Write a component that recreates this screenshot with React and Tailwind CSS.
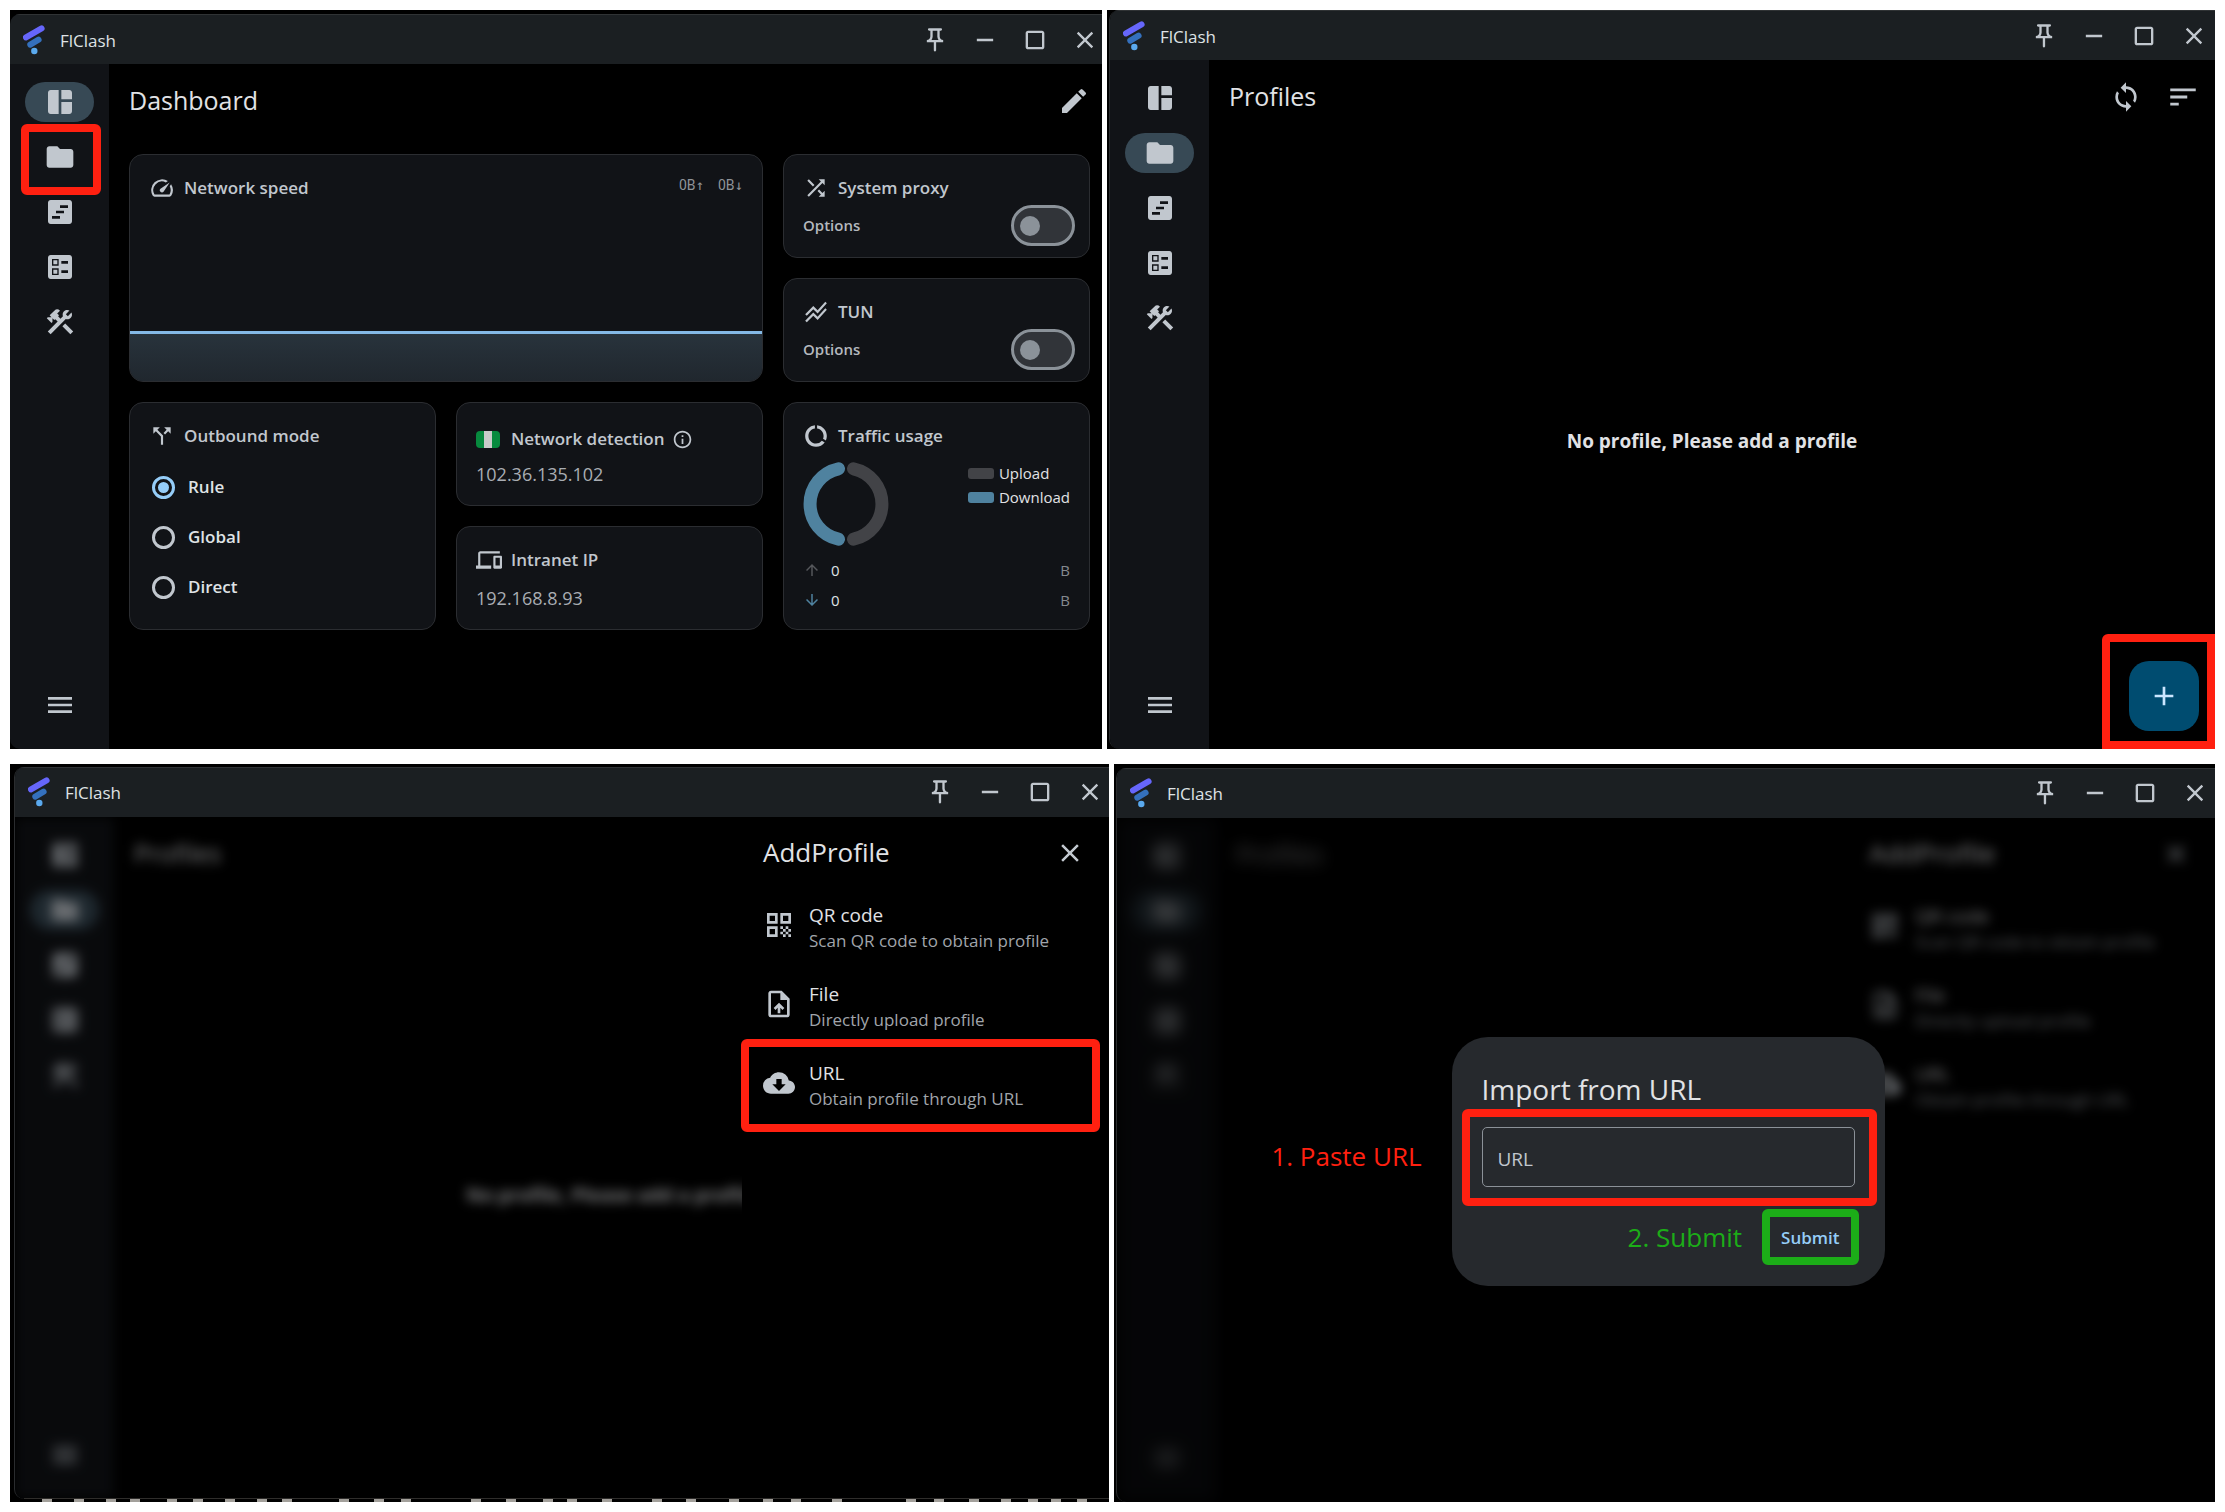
import React from "react";
import {
  MdSpaceDashboard,
  MdFolder,
  MdViewTimeline,
  MdBallot,
  MdConstruction,
  MdMenu,
  MdOutlinePushPin,
  MdRemove,
  MdCropSquare,
  MdClose,
  MdEdit,
  MdSpeed,
  MdShuffle,
  MdStackedLineChart,
  MdCallSplit,
  MdDevices,
  MdDataSaverOff,
  MdInfoOutline,
  MdSync,
  MdSort,
  MdAdd,
  MdQrCode,
  MdOutlineUploadFile,
  MdCloudDownload,
  MdArrowUpward,
  MdArrowDownward,
} from "react-icons/md";

function Logo() {
  return (
    <svg viewBox="0 0 22 30" className="h-[30px] w-[22px] shrink-0" aria-hidden="true">
      <path d="M3 12.4 L18.6 3.4" stroke="#6666fb" strokeWidth="6" strokeLinecap="round" />
      <path d="M7.3 19.6 L15.6 14.7" stroke="#3470bd" strokeWidth="6" strokeLinecap="round" />
      <circle cx="11.3" cy="26" r="3.2" fill="#5aa9ee" />
    </svg>
  );
}

const windowControls = [
  { label: "Pin", Icon: MdOutlinePushPin },
  { label: "Minimize", Icon: MdRemove },
  { label: "Maximize", Icon: MdCropSquare },
  { label: "Close", Icon: MdClose },
];

function Window({ frame, edge, bar, children }) {
  return (
    <section className={"flex min-w-0 overflow-hidden bg-black " + frame}>
      <div className={"flex min-w-0 grow flex-col overflow-hidden rounded-l-[10px] border-[#2a2c2e] " + edge}>
        <header
          className={
            "flex h-[50px] shrink-0 items-center border-t border-[#303335] bg-[#1b1f22] pl-[13px] " + bar
          }
        >
          <Logo />
          <span className="ml-[15px] grow pt-0.5 text-[17px] text-[#dfe2e5]">FlClash</span>
          <div className="flex gap-[22px]">
            {windowControls.map(({ label, Icon }) => (
              <button key={label} type="button" aria-label={label} className="text-[#c1c7ce]">
                <Icon size={28} />
              </button>
            ))}
          </div>
        </header>
        {children}
      </div>
    </section>
  );
}

const navItems = [
  { id: "dashboard", label: "Dashboard", Icon: MdSpaceDashboard },
  { id: "profiles", label: "Profiles", Icon: MdFolder },
  { id: "requests", label: "Requests", Icon: MdViewTimeline },
  { id: "connections", label: "Connections", Icon: MdBallot },
  { id: "tools", label: "Tools", Icon: MdConstruction },
];

function Marker({ className }) {
  return (
    <span
      aria-hidden="true"
      className={"pointer-events-none absolute rounded-md border-8 border-[#ff2010] " + className}
    />
  );
}

function Sidebar({ active, marked }) {
  return (
    <nav className="flex w-[99px] shrink-0 flex-col items-center bg-[#111317] pt-[18px] pb-7 text-[#c1c7ce]">
      <div className="flex grow flex-col gap-[15px]">
        {navItems.map(({ id, label, Icon }) => (
          <button
            key={id}
            type="button"
            aria-label={label}
            className={
              "relative flex h-10 w-[69px] items-center justify-center rounded-full " +
              (id === active ? "bg-[#374955]" : "")
            }
          >
            <Icon size={32} />
            {id === marked && <Marker className="-right-[7px] -left-1 -top-[13px] h-[71px]" />}
          </button>
        ))}
      </div>
      <button type="button" aria-label="Menu">
        <MdMenu size={32} />
      </button>
    </nav>
  );
}

function Card({ className, children }) {
  return (
    <div
      className={
        "flex flex-col overflow-hidden rounded-[14px] border border-[#2b2d31] bg-[#111317] px-[19px] pt-5 " +
        (className || "")
      }
    >
      {children}
    </div>
  );
}

function CardTitle({ Icon, children }) {
  return (
    <h2 className="flex h-[26px] items-center gap-[9px] text-[17px] font-[560] text-[#c1c7ce]">
      <Icon size={26} />
      {children}
    </h2>
  );
}

function SwitchCard({ Icon, title }) {
  return (
    <Card>
      <CardTitle Icon={Icon}>{title}</CardTitle>
      <label className="mt-1 -mr-[5px] flex items-center justify-between text-[15px] font-[560] text-[#b4b8be]">
        Options
        <input
          type="checkbox"
          role="switch"
          aria-label={title}
          className="flex h-[41px] w-16 appearance-none items-center rounded-full border-3 border-[#8b9299] bg-[#313439] pl-1.5 before:size-5 before:rounded-full before:bg-[#8b9299]"
        />
      </label>
    </Card>
  );
}

function Flag() {
  return (
    <span className="flex h-[17px] w-6 overflow-hidden rounded-sm bg-[#078a3e]" aria-hidden="true">
      <span className="mx-auto h-full w-2 bg-[#c9cbca]" />
    </span>
  );
}

function TrafficRow({ Icon, color }) {
  return (
    <div className="flex h-[30px] items-center text-[15px] text-[#dfe2e5]">
      <Icon size={18} className={"mr-2.5 " + color} />
      <span className="grow">0</span>
      <span className="text-[#85898f]">B</span>
    </div>
  );
}

function Dashboard() {
  return (
    <div className="flex grow">
      <Sidebar active="dashboard" marked="profiles" />
      <main className="min-w-0 grow pr-3 pl-5">
        <div className="flex h-[74px] items-center justify-between">
          <h1 className="text-[25px] text-[#e1e2e5]">Dashboard</h1>
          <button type="button" aria-label="Edit" className="text-[#c1c7ce]">
            <MdEdit size={32} />
          </button>
        </div>
        <div className="mt-4 grid auto-rows-[104px] grid-cols-3 gap-5">
          <Card className="col-span-2 row-span-2">
            <div className="flex items-start justify-between">
              <CardTitle Icon={MdSpeed}>Network speed</CardTitle>
              <span className="flex gap-3.5 font-['Roboto','DejaVu_Sans_Mono',monospace] text-[14px] leading-[20px] text-[#8f9399]">
                <span>0B↑</span>
                <span>0B↓</span>
              </span>
            </div>
            <div className="-mx-[19px] mt-auto h-[50px] border-t-3 border-[#84b9e6] bg-linear-to-b from-[#28333c] to-[#20272e]" />
          </Card>
          <SwitchCard Icon={MdShuffle} title="System proxy" />
          <SwitchCard Icon={MdStackedLineChart} title="TUN" />
          <Card className="row-span-2">
            <CardTitle Icon={MdCallSplit}>Outbound mode</CardTitle>
            <div className="mt-[13px]">
              {["Rule", "Global", "Direct"].map((mode) => (
                <label
                  key={mode}
                  className="ml-[3px] flex h-[50px] items-center gap-[13px] text-[17px] font-semibold text-[#dfe2e5]"
                >
                  <input
                    type="radio"
                    name="mode"
                    defaultChecked={mode === "Rule"}
                    className="flex size-[23px] appearance-none items-center justify-center rounded-full border-[3px] border-[#c1c7ce] checked:border-[#95cdf8] checked:before:size-[11px] checked:before:rounded-full checked:before:bg-[#95cdf8]"
                  />
                  {mode}
                </label>
              ))}
            </div>
          </Card>
          <Card>
            <h2 className="flex h-8 items-center text-[17px] font-[560] text-[#c1c7ce]">
              <Flag />
              <span className="mr-[7px] ml-[11px]">Network detection</span>
              <MdInfoOutline size={21} />
            </h2>
            <p className="mt-[5px] text-[18px] leading-7 text-[#a9adb3]">102.36.135.102</p>
          </Card>
          <Card className="row-span-2">
            <CardTitle Icon={MdDataSaverOff}>Traffic usage</CardTitle>
            <div className="mt-3 flex justify-between">
              <svg viewBox="0 0 86 86" className="size-[86px]" fill="none" strokeWidth="13" strokeLinecap="round">
                <path d="M50.5 7.8 A36 36 0 0 1 50.5 78.2" stroke="#424347" />
                <path d="M35.5 7.8 A36 36 0 0 0 35.5 78.2" stroke="#4f829f" />
              </svg>
              <ul className="text-[15px] leading-6 text-[#e1e2e5]">
                <li className="flex items-center gap-[5px]">
                  <span className="h-[11px] w-[26px] rounded-[3px] bg-[#424347]" />
                  Upload
                </li>
                <li className="flex items-center gap-[5px]">
                  <span className="h-[11px] w-[26px] rounded-[3px] bg-[#4f829f]" />
                  Download
                </li>
              </ul>
            </div>
            <div className="mt-2">
              <TrafficRow Icon={MdArrowUpward} color="text-[#55575b]" />
              <TrafficRow Icon={MdArrowDownward} color="text-[#4f829f]" />
            </div>
          </Card>
          <Card>
            <CardTitle Icon={MdDevices}>Intranet IP</CardTitle>
            <p className="mt-[11px] text-[18px] leading-7 text-[#a9adb3]">192.168.8.93</p>
          </Card>
        </div>
      </main>
    </div>
  );
}

function Profiles({ showActions }) {
  return (
    <div className="relative flex grow">
      <Sidebar active="profiles" />
      <main className="flex min-w-0 grow flex-col">
        <div className="flex h-[74px] items-center justify-between pr-[15px] pl-5">
          <h1 className="text-[25px] text-[#e1e2e5]">Profiles</h1>
          {showActions && (
            <div className="flex items-center gap-6 text-[#c1c7ce]">
              <button type="button" aria-label="Sync">
                <MdSync size={32} />
              </button>
              <button type="button" aria-label="Sort">
                <MdSort size={34} />
              </button>
            </div>
          )}
        </div>
        <div className="flex grow items-center justify-center text-[19px] font-bold text-[#e1e2e5]">
          No profile, Please add a profile
        </div>
      </main>
      {showActions && (
        <div className="absolute right-0 bottom-0 rounded-tl-md border-8 border-[#ff2010] pt-[19px] pr-2 pb-2.5 pl-[19px]">
          <button
            type="button"
            aria-label="Add profile"
            className="flex size-[70px] items-center justify-center rounded-[20px] bg-[#004c70] text-[#cbe6ff]"
          >
            <MdAdd size={32} />
          </button>
        </div>
      )}
    </div>
  );
}

const sources = [
  { title: "QR code", text: "Scan QR code to obtain profile", Icon: MdQrCode },
  { title: "File", text: "Directly upload profile", Icon: MdOutlineUploadFile },
  { title: "URL", text: "Obtain profile through URL", Icon: MdCloudDownload },
];

function AddProfile({ marked }) {
  return (
    <aside className="absolute inset-y-0 right-0 w-[367px] bg-black pl-[21px]">
      <div className="flex h-[72px] items-center justify-between pr-6">
        <h2 className="text-[26px] text-[#e1e2e5]">AddProfile</h2>
        <button type="button" aria-label="Close panel" className="text-[#c1c7ce]">
          <MdClose size={30} />
        </button>
      </div>
      {sources.map(({ title, text, Icon }) => (
        <button key={title} type="button" className="relative flex h-[79px] w-full items-center gap-3.5 text-left">
          <Icon size={32} className="mb-1.5 shrink-0 text-[#c1c7ce]" />
          <span>
            <span className="block text-[19px] leading-[26px] font-medium text-[#e1e2e5]">{title}</span>
            <span className="block text-[17px] leading-[26px] text-[#a0a5ab]">{text}</span>
          </span>
          {marked === title && <Marker className="-top-2 right-[9px] -left-[22px] h-[93px]" />}
        </button>
      ))}
    </aside>
  );
}

const fringe = [
  47, 79, 111, 135, 172, 198, 230, 262, 287, 344, 379, 406, 476, 511, 548, 572, 607, 657, 691, 734, 768, 796, 837, 911,
  939, 974, 1006, 1033, 1056, 1082,
];

function AddProfileStep() {
  return (
    <div className="relative flex grow overflow-hidden">
      <div className="flex grow opacity-55 blur-[6px]" inert>
        <Profiles />
      </div>
      <AddProfile marked="URL" />
    </div>
  );
}

function ImportStep() {
  return (
    <div className="relative flex grow overflow-hidden">
      <div className="flex grow" inert>
        <div className="flex grow opacity-30 blur-[8px]">
          <Profiles />
        </div>
        <div className="absolute inset-0 opacity-55 blur-[6px]">
          <AddProfile />
        </div>
      </div>
      <div className="absolute inset-0 flex items-center justify-center pt-1 pl-1">
        <form className="relative w-[433px] rounded-[36px] bg-[#26292d] px-[30px] pt-8 pb-[21px]">
          <h2 className="text-[28px] leading-10 text-[#e1e2e5]">Import from URL</h2>
          <div className="relative mt-[18px]">
            <input
              type="text"
              aria-label="URL"
              placeholder="URL"
              className="h-[60px] w-full rounded-[5px] border border-[#8b9198] bg-transparent px-[15px] pt-1 text-[19px] text-[#e1e2e5] placeholder:text-[#c1c7ce]"
            />
            <Marker className="-right-[22px] -left-5 -top-[18px] h-[97px]" />
          </div>
          <div className="mt-[22px] -mr-1 flex items-center justify-end gap-5">
            <span className="text-[26px] text-[#1cad18]">2. Submit</span>
            <button
              type="button"
              className="h-14 rounded-md border-8 border-[#1cad18] px-[11px] text-[17px] font-semibold text-[#95cdf8]"
            >
              Submit
            </button>
          </div>
          <p className="absolute top-[100px] right-full mr-[30px] text-[26px] whitespace-nowrap text-[#ff2010]">
            1. Paste URL
          </p>
        </form>
      </div>
    </div>
  );
}

export default function App() {
  return (
    <div className="grid min-h-screen grid-rows-2 gap-[15px] bg-white p-2.5 font-['Open_Sans',sans-serif]">
      <div className="grid grid-cols-[1092fr_1108fr] gap-[5px]">
        <Window frame="pt-1" edge="" bar="pr-[3px]">
          <Dashboard />
        </Window>
        <Window frame="pl-0.5" edge="border-l" bar="pr-[7px]">
          <Profiles showActions />
        </Window>
      </div>
      <div className="grid grid-cols-[1099fr_1101fr] gap-[5px]">
        <Window frame="relative pt-[3px] pb-[3px] pl-1" edge="border-l" bar="pr-[5px]">
          <AddProfileStep />
          <svg
            viewBox="0 0 1099 4"
            preserveAspectRatio="none"
            className="absolute inset-x-0 bottom-0 h-1 w-full"
            aria-hidden="true"
          >
            <rect x="14" y="0" width="1085" height="1" fill="#2f2d2b" />
            {fringe.map((x) => (
              <rect key={x} x={x - 15} y="1" width="10" height="3" fill="#a3a09b" />
            ))}
          </svg>
        </Window>
        <Window frame="pt-1 pl-0.5" edge="border-l" bar="pr-1.5">
          <ImportStep />
        </Window>
      </div>
    </div>
  );
}
